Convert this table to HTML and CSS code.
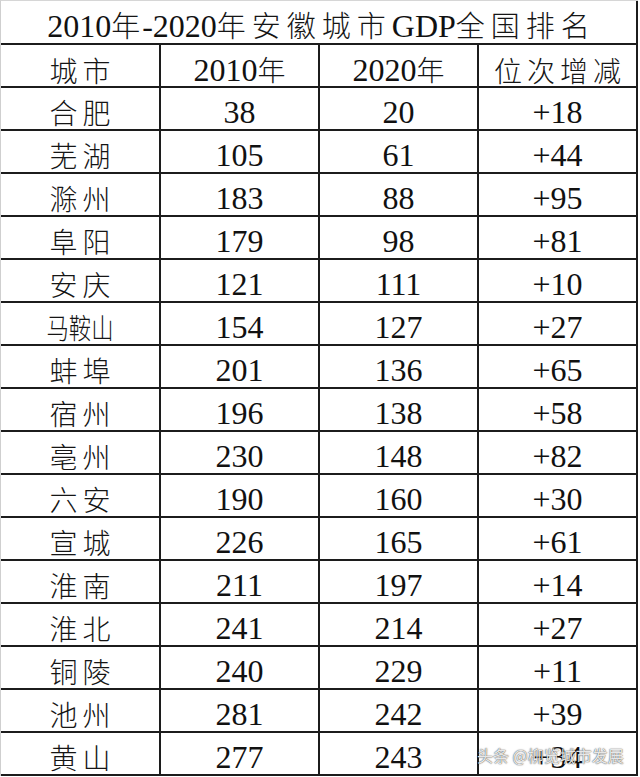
FILE: index.html
```html
<!DOCTYPE html>
<html lang="zh-CN">
<head>
<meta charset="utf-8">
<title>2010年-2020年安徽城市GDP全国排名</title>
<link rel="stylesheet" href="styles.css">
</head>
<body>
<div class="sheet">
  <div class="grid">
    <div class="cell title">2010<span class="zh tight">年</span>-2020<span class="zh">年安徽城市</span>GDP<span class="zh end">全国排名</span></div>
    <div class="cell head"><span class="zh end">城市</span></div>
    <div class="cell head">2010<span class="zh end">年</span></div>
    <div class="cell head">2020<span class="zh end">年</span></div>
    <div class="cell head"><span class="zh end">位次增减</span></div>

    <div class="cell"><span class="zh end">合肥</span></div><div class="cell">38</div><div class="cell">20</div><div class="cell">+18</div>
    <div class="cell"><span class="zh end">芜湖</span></div><div class="cell">105</div><div class="cell">61</div><div class="cell">+44</div>
    <div class="cell"><span class="zh end">滁州</span></div><div class="cell">183</div><div class="cell">88</div><div class="cell">+95</div>
    <div class="cell"><span class="zh end">阜阳</span></div><div class="cell">179</div><div class="cell">98</div><div class="cell">+81</div>
    <div class="cell"><span class="zh end">安庆</span></div><div class="cell">121</div><div class="cell">111</div><div class="cell">+10</div>
    <div class="cell"><span class="zh squeeze">马鞍山</span></div><div class="cell">154</div><div class="cell">127</div><div class="cell">+27</div>
    <div class="cell"><span class="zh end">蚌埠</span></div><div class="cell">201</div><div class="cell">136</div><div class="cell">+65</div>
    <div class="cell"><span class="zh end">宿州</span></div><div class="cell">196</div><div class="cell">138</div><div class="cell">+58</div>
    <div class="cell"><span class="zh end">亳州</span></div><div class="cell">230</div><div class="cell">148</div><div class="cell">+82</div>
    <div class="cell"><span class="zh end">六安</span></div><div class="cell">190</div><div class="cell">160</div><div class="cell">+30</div>
    <div class="cell"><span class="zh end">宣城</span></div><div class="cell">226</div><div class="cell">165</div><div class="cell">+61</div>
    <div class="cell"><span class="zh end">淮南</span></div><div class="cell">211</div><div class="cell">197</div><div class="cell">+14</div>
    <div class="cell"><span class="zh end">淮北</span></div><div class="cell">241</div><div class="cell">214</div><div class="cell">+27</div>
    <div class="cell"><span class="zh end">铜陵</span></div><div class="cell">240</div><div class="cell">229</div><div class="cell">+11</div>
    <div class="cell"><span class="zh end">池州</span></div><div class="cell">281</div><div class="cell">242</div><div class="cell">+39</div>
    <div class="cell"><span class="zh end">黄山</span></div><div class="cell">277</div><div class="cell">243</div><div class="cell">+34</div>
  </div>
  <div class="watermark">头条 @柳览城市发展</div>
</div>
</body>
</html>
```
FILE: styles.css
```css
* { box-sizing: border-box; }
html, body { margin: 0; padding: 0; background: #fff; }
body {
  width: 640px;
  height: 777px;
  overflow: hidden;
  font-family: "Liberation Serif", "Noto Sans CJK SC", serif;
  color: #111;
}
.sheet {
  position: relative;
  width: 640px;
  height: 777px;
}
.grid {
  display: grid;
  width: 638px;
  grid-template-columns: 160px 159px 159px 159px;
  grid-template-rows: 44px repeat(17, 43px);
  border-left: 1px solid #cfcfcf;
  border-top: 1px solid #d6d6d6;
}
.cell {
  display: flex;
  align-items: baseline;
  justify-content: center;
  align-content: center;
  flex-wrap: wrap;
  border-right: 2px solid #1c1c1c;
  border-bottom: 2px solid #1c1c1c;
  font-size: 32px;
  line-height: 1;
  padding-top: 6px;
  white-space: nowrap;
}
.zh {
  font-family: "Noto Sans CJK SC", sans-serif;
  font-weight: 300;
  font-size: 28px;
  letter-spacing: 5px;
  color: #151515;
}
.zh.end { margin-right: -5px; }
.zh.squeeze {
  display: inline-block;
  letter-spacing: 0;
  transform: scaleX(0.8);
}
.title {
  grid-column: 1 / -1;
  padding-top: 7px;
}
.title .zh {
  font-size: 29px;
  letter-spacing: 6px;
}
.title .zh.tight { letter-spacing: 2px; }
.title .zh.end { margin-right: -6px; }
.head { padding-top: 9px; }
.watermark {
  position: absolute;
  left: 477px;
  top: 745px;
  font-family: "Noto Sans CJK SC", sans-serif;
  font-size: 16px;
  line-height: 20px;
  color: rgba(255, 255, 255, 0.9);
  text-shadow: 0 0 1px rgba(0, 0, 0, 0.8), 0 0 2px rgba(0, 0, 0, 0.35);
}
```
